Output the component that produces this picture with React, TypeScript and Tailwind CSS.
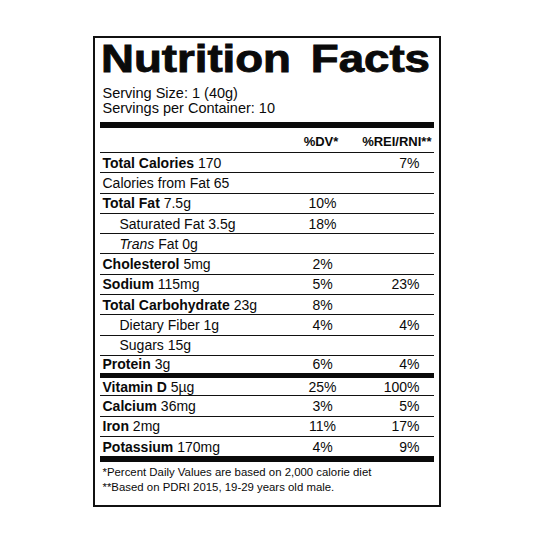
type Row = {
  name: string;
  amount?: string;
  bold?: boolean;
  indent?: boolean;
  italicPrefix?: string;
  dv?: string;
  rei?: string;
  h: string;
  line?: boolean;
};

const mainRows: Row[] = [
  { name: "Total Calories", amount: "170", bold: true, rei: "7%", h: "h-[20.3px]", line: true },
  { name: "Calories from Fat 65", h: "h-[20.3px]", line: true },
  { name: "Total Fat", amount: "7.5g", bold: true, dv: "10%", h: "h-[20.3px]", line: true },
  { name: "Saturated Fat 3.5g", indent: true, dv: "18%", h: "h-[20.3px]", line: true },
  { name: " Fat 0g", italicPrefix: "Trans", indent: true, h: "h-[20.3px]", line: true },
  { name: "Cholesterol", amount: "5mg", bold: true, dv: "2%", h: "h-[20.3px]", line: true },
  { name: "Sodium", amount: "115mg", bold: true, dv: "5%", rei: "23%", h: "h-[20.3px]", line: true },
  { name: "Total Carbohydrate", amount: "23g", bold: true, dv: "8%", h: "h-[20.3px]", line: true },
  { name: "Dietary Fiber 1g", indent: true, dv: "4%", rei: "4%", h: "h-[20.3px]", line: true },
  { name: "Sugars 15g", indent: true, h: "h-[20.3px]", line: true },
  { name: "Protein", amount: "3g", bold: true, dv: "6%", rei: "4%", h: "h-[17px]" },
];

const mineralRows: Row[] = [
  { name: "Vitamin D", amount: "5µg", bold: true, dv: "25%", rei: "100%", h: "h-[18.5px]", line: true },
  { name: "Calcium", amount: "36mg", bold: true, dv: "3%", rei: "5%", h: "h-[20.3px]", line: true },
  { name: "Iron", amount: "2mg", bold: true, dv: "11%", rei: "17%", h: "h-[20.3px]", line: true },
  { name: "Potassium", amount: "170mg", bold: true, dv: "4%", rei: "9%", h: "h-[19px]" },
];

function NutrientRow({ row }: { row: Row }) {
  return (
    <div
      className={`flex items-center text-[14px] leading-[16px] ${row.h} ${
        row.line ? "border-b-[1.5px] border-[#111]" : ""
      }`}
    >
      <div className={`flex-1 whitespace-nowrap ${row.indent ? "pl-[20px]" : "pl-[3px]"}`}>
        {row.italicPrefix && <span className="italic">{row.italicPrefix}</span>}
        {row.bold ? (
          <>
            <span className="font-bold">{row.name}</span> {row.amount}
          </>
        ) : (
          row.name
        )}
      </div>
      <div className="w-[50px] text-center">{row.dv}</div>
      <div className="w-[72px] text-right">{row.rei}</div>
      <div className="w-[14px]" />
    </div>
  );
}

export default function App() {
  return (
    <div className="min-h-[533px] bg-white pt-[36px] font-['Liberation_Sans',Arial,sans-serif] text-[#0a0a0a]">
      <div className="mx-auto w-[348px] border-2 border-[#111] px-[5px] pt-[2px] pb-[10px]">
        <div className="h-[38px] whitespace-nowrap pl-[1px] text-[38px] leading-[38px] font-bold">
          <span className="inline-block origin-left scale-x-[1.2] [-webkit-text-stroke:0.9px_#0a0a0a] [word-spacing:6px]">
            Nutrition Facts
          </span>
        </div>
        <div className="mt-[7.5px] pl-[3px] text-[14.5px] leading-[15px]">
          <div>Serving Size: 1 (40g)</div>
          <div>Servings per Container: 10</div>
        </div>
        <div className="mt-[6.5px] h-[6px] bg-[#0a0a0a]" />
        <div className="flex h-[25px] items-end border-b-[1.5px] border-[#111] pb-[2px] text-[13px] leading-[16px] font-bold">
          <div className="flex-1" />
          <div className="w-[50px] pr-[3px] text-center">%DV*</div>
          <div className="w-[86px] pr-[2px] text-right">%REI/RNI**</div>
        </div>
        {mainRows.map((r) => (
          <NutrientRow key={r.name + (r.italicPrefix ?? "")} row={r} />
        ))}
        <div className="h-[5px] bg-[#0a0a0a]" />
        {mineralRows.map((r) => (
          <NutrientRow key={r.name} row={r} />
        ))}
        <div className="h-[5.5px] bg-[#0a0a0a]" />
        <div className="pt-[3.4px] pl-[3px] text-[11.4px] leading-[15px]">
          <div>*Percent Daily Values are based on 2,000 calorie diet</div>
          <div>**Based on PDRI 2015, 19-29 years old male.</div>
        </div>
      </div>
    </div>
  );
}
